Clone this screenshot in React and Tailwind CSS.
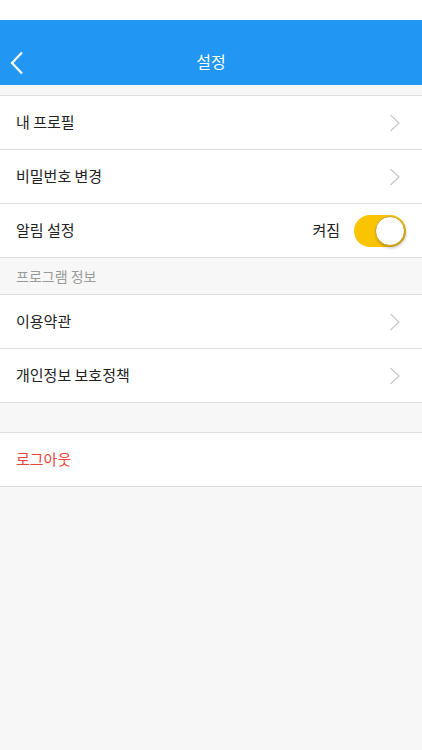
import React from 'react';

function Chevron() {
    return (
        <svg width="12" height="18" viewBox="0 0 12 18" fill="none" className="shrink-0">
            <path d="M1.5 1 L10 9 L1.5 17" stroke="#c8c8c8" strokeWidth="1.2" />
        </svg>
    );
}

function Row({ label, right, red }) {
    return (
        <div className="flex items-center justify-between h-[54px] pl-4 pr-[21px] bg-white border-b border-[#dedede]">
            <span className={red ? 'text-[15px] text-[#e8463c]' : 'text-[15px] text-[#222]'}>{label}</span>
            {right ?? <Chevron />}
        </div>
    );
}

export default function App() {
    return (
        <div
            className="min-h-[750px] bg-[#f7f7f7]"
            style={{ fontFamily: '"Noto Sans CJK KR", "Noto Sans", sans-serif' }}
        >
            <div className="h-5 bg-white" />
            <div className="relative flex items-end justify-center h-[65px] bg-[#2196f3] pb-[12px]">
                <svg width="14" height="24" viewBox="0 0 14 24" fill="none" className="absolute left-[10px] bottom-[10px]">
                    <path d="M12 1.5 L2 12 L12 22.5" stroke="#fff" strokeWidth="2.2" />
                </svg>
                <span className="text-white text-[16px]">설정</span>
            </div>
            <div className="h-[11px] border-b border-[#dedede]" />
            <Row label="내 프로필" />
            <Row label="비밀번호 변경" />
            <Row
                label="알림 설정"
                right={
                    <div className="flex items-center gap-[14px] -mr-[5px]">
                        <span className="text-[15px] text-[#222]">켜짐</span>
                        <div className="flex items-center justify-end w-[52px] h-[32px] rounded-full bg-[#fbc400] p-[1px]">
                            <div className="w-[30px] h-[30px] rounded-full bg-white border border-[#c9a21a] shadow-[1px_2px_3px_rgba(0,0,0,0.25)]" />
                        </div>
                    </div>
                }
            />
            <div className="flex items-center h-[37px] pl-4 text-[14px] text-[#9a9a9a] border-b border-[#dedede]">
                프로그램 정보
            </div>
            <Row label="이용약관" />
            <Row label="개인정보 보호정책" />
            <div className="h-[30px] border-b border-[#dedede]" />
            <Row label="로그아웃" red right={<span />} />
        </div>
    );
}
